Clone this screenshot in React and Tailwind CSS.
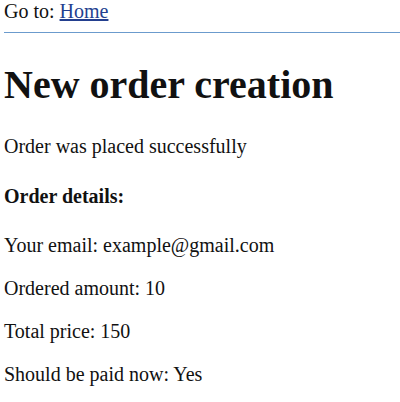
export default function App() {
  return (
    <div className="min-h-[402px] bg-white pl-1 text-[20px] leading-[23px] text-[#111] font-['Liberation_Serif','Times_New_Roman',serif]">
      <div>
        Go to:{" "}
        <a href="#" className="text-[#233f8f] underline">
          Home
        </a>
      </div>
      <hr className="mt-[9px] border-0 border-t border-[#6b9bcd]" />
      <h1 className="mt-[29px] mb-[27px] text-[40px] leading-[46px] font-bold">New order creation</h1>
      <p>Order was placed successfully</p>
      <h4 className="mt-[27px] mb-[26px] font-bold">Order details:</h4>
      <div className="flex flex-col gap-5">
        <p>Your email: example@gmail.com</p>
        <p>Ordered amount: 10</p>
        <p>Total price: 150</p>
        <p>Should be paid now: Yes</p>
      </div>
    </div>
  );
}
